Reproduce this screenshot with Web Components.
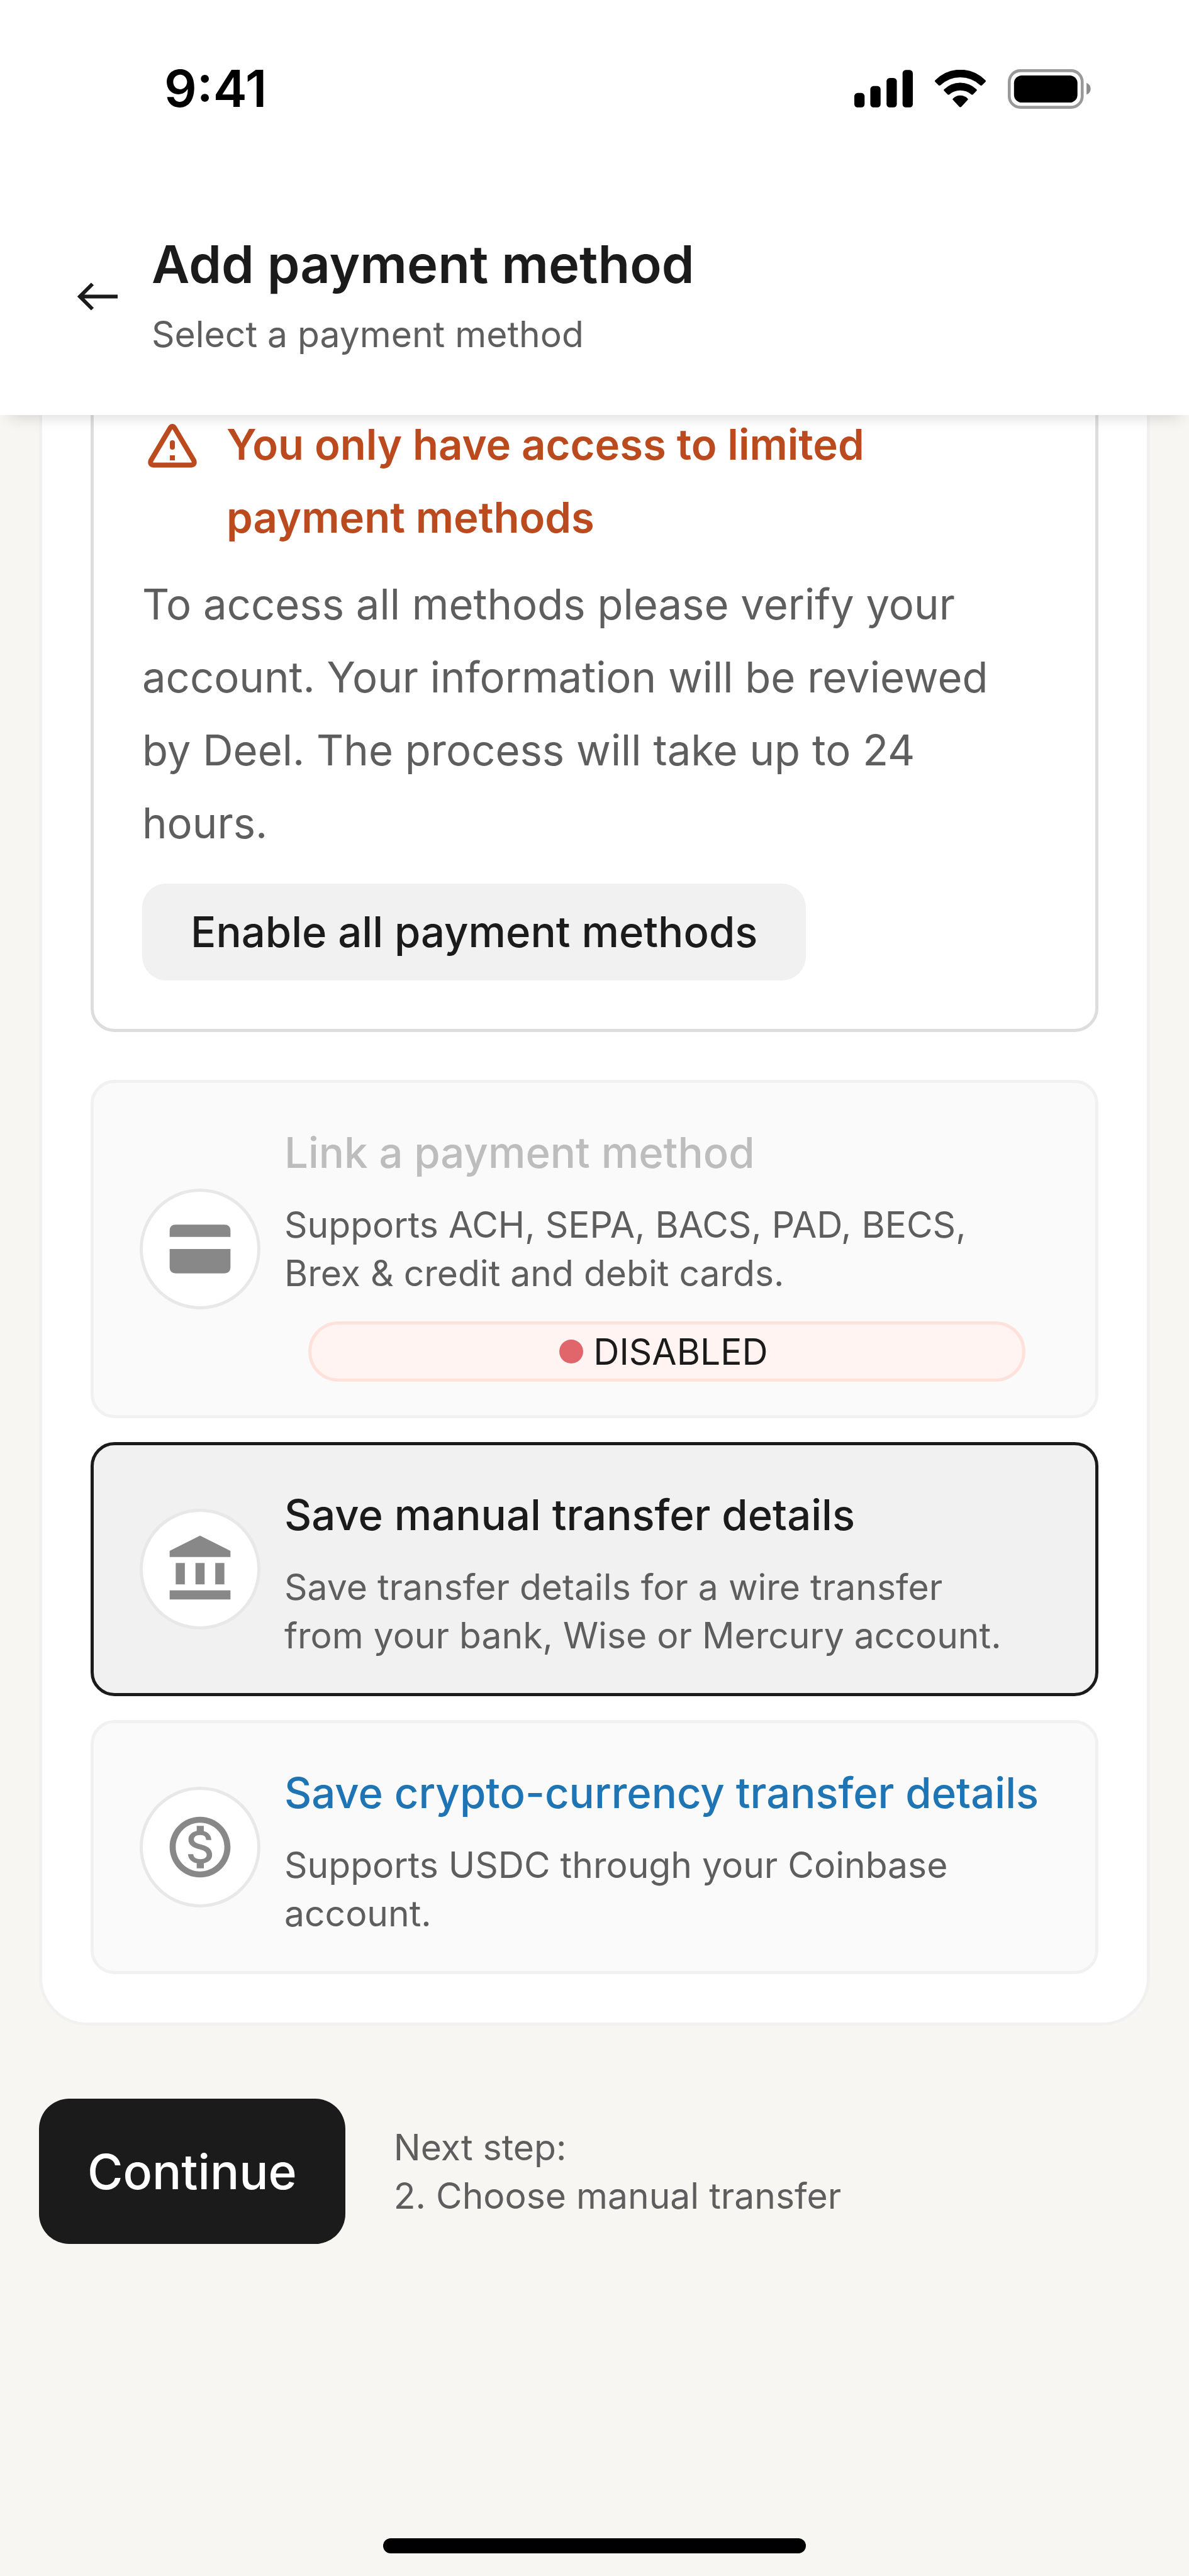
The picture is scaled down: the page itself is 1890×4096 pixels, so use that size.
<!DOCTYPE html>
<html lang="en">
<head>
<meta charset="utf-8">
<meta name="viewport" content="width=device-width, initial-scale=1">
<title>Add payment method</title>
<style>
  :root {
    --ink: #1b1b1b;
    --muted: #5e5e5e;
    --line: #f1f1f1;
    --text-sm: 57px;
    --text-md: 67px;
    --text-lg: 77px;
    --text-xl: 83px;
    --row-sm: 77px;
    --row-md: 116px;
    --space: 77px;
    --half: 38px;
  }
  body {
    margin: 0;
    background: #f7f6f2;
    color: var(--ink);
    font-family: Inter, "Liberation Sans", sans-serif;
  }
</style>
</head>
<body>
<app-screen>
  <status-bar slot="top">9:41</status-bar>
  <page-header slot="top">
    Add payment method
    <span slot="subtitle">Select a payment method</span>
  </page-header>

  <content-panel>
    <alert-box>
      <span slot="title">You only have access to limited payment methods</span>
      To access all methods please verify your account. Your information will be reviewed by Deel. The process will take up to 24 hours.
      <span slot="action">Enable all payment methods</span>
    </alert-box>
    <method-option icon="card" disabled>
      <span slot="title">Link a payment method</span>
      Supports ACH, SEPA, BACS, PAD, BECS, Brex &amp; credit and debit cards.
      <status-badge slot="badge">DISABLED</status-badge>
    </method-option>
    <method-option icon="bank" selected>
      <span slot="title">Save manual transfer details</span>
      Save transfer details for a wire transfer from your bank, Wise or Mercury account.
    </method-option>
    <method-option icon="coin" link>
      <span slot="title">Save crypto-currency transfer details</span>
      Supports USDC through your Coinbase account.
    </method-option>
  </content-panel>

  <step-footer>
    Continue
    <span slot="label">Next step:</span>
    <span slot="step">2. Choose manual transfer</span>
  </step-footer>
</app-screen>

<script>
  const define = (name, html, setup) => {
    const template = document.createElement('template');
    template.innerHTML = html;
    customElements.define(name, class extends HTMLElement {
      constructor() {
        super();
        this.attachShadow({ mode: 'open' }).append(template.content.cloneNode(true));
      }
      connectedCallback() {
        if (setup) setup(this, this.shadowRoot);
      }
    });
  };

  define('app-screen', `
    <style>
      :host { display: flex; flex-direction: column; min-height: 100vh; }
      .top { position: relative; z-index: 1; background: #fff; box-shadow: 0 16px 24px -14px rgba(0, 0, 0, .16); }
      /* the list is scrolled, so its first rows run beneath the header */
      main { margin: -175px 62px 0; }
      .home { width: 672px; max-width: 60%; height: 24px; margin: auto auto 36px; border-radius: 12px; background: #000; }
    </style>
    <div class="top"><slot name="top"></slot></div>
    <main><slot></slot></main>
    <div class="home"></div>
  `);

  define('status-bar', `
    <style>
      :host { display: flex; align-items: center; justify-content: space-between; box-sizing: border-box;
        height: 282px; padding: 0 156px 0 261px; color: #000; font-size: 81px; font-weight: 600; }
      .icons { display: flex; align-items: center; gap: 35px; }
      svg { display: block; }
    </style>
    <slot></slot>
    <div class="icons">
      <svg width="93" height="60" viewBox="114 98 285 182">
        <rect x="114" y="210" width="50" height="70" rx="16"/>
        <rect x="192" y="176" width="50" height="104" rx="16"/>
        <rect x="271" y="137" width="50" height="143" rx="16"/>
        <rect x="349" y="98" width="50" height="182" rx="16"/>
      </svg>
      <svg width="81" height="60" viewBox="507 98 246 182">
        <path d="M509 148Q560 97 630 97T751 148Q755 152 751 156L735 172Q731 176 726 172Q685 134 630 134T534 172Q529 176 525 172L509 156Q505 152 509 148Z"/>
        <path d="M552 192Q585 160 630 160T708 192Q712 196 708 200L692 216Q687 221 682 216Q660 197 630 197T578 216Q573 221 568 216L552 200Q548 196 552 192Z"/>
        <path d="M595 236Q610 222 630 222T665 236Q669 240 665 244L635 276Q630 281 625 276L595 244Q591 240 595 236Z"/>
      </svg>
      <svg width="132" height="63" viewBox="861 93 403 192">
        <rect x="868" y="100" width="354" height="178" rx="54" fill="none" stroke="#999" stroke-width="14"/>
        <rect x="891" y="123" width="308" height="132" rx="38"/>
        <path d="M1243 159Q1263 168 1263 188T1243 216Z" fill="#8c8c8c"/>
      </svg>
    </div>
  `);

  define('page-header', `
    <style>
      :host { display: flex; align-items: center; gap: 29px; padding: 80px 97px 80px; }
      button { flex: none; width: 115px; height: 115px; padding: 0; border: 0; background: none; color: var(--ink); cursor: pointer; }
      svg { display: block; }
      h1 { margin: 0 0 6px; font-size: var(--text-xl); line-height: var(--row-md); font-weight: 600; }
      p { margin: 0; font-size: var(--text-sm); line-height: 96px; color: var(--muted); }
    </style>
    <button type="button" aria-label="Back">
      <svg width="115" height="115" viewBox="0 0 115 115" fill="none" stroke="currentColor" stroke-width="6">
        <path d="M90 57.500H30M50 37.500L30 57.500L50 77.500"/>
      </svg>
    </button>
    <div>
      <h1><slot></slot></h1>
      <p><slot name="subtitle"></slot></p>
    </div>
  `);

  define('content-panel', `
    <style>
      :host { display: flex; flex-direction: column; gap: var(--half); padding: var(--space);
        border: 5px solid var(--line); border-radius: 77px; background: #fff; }
    </style>
    <slot></slot>
  `);

  define('alert-box', `
    <style>
      :host { display: block; margin-bottom: var(--half); padding: var(--space); border: 5px solid #ddd;
        border-radius: 38px; font-size: var(--text-md); line-height: var(--row-md); }
      .head { display: flex; gap: var(--half); color: #bb4a1e; }
      svg { flex: none; display: block; margin-top: 10px; }
      h2 { margin: 0; font-size: inherit; font-weight: 600; }
      p { margin: 22px 0 var(--half); color: var(--muted); }
      button { height: 154px; padding: 0 var(--space); border: 0; border-radius: 38px; background: #f1f1f1;
        color: var(--ink); font: inherit; font-weight: 500; cursor: pointer; }
    </style>
    <div class="head">
      <svg width="96" height="96" viewBox="0 0 96 96" fill="none" stroke="currentColor">
        <path d="M44.500 21.500Q48 16.500 51.500 21.500L82 73Q84.500 79.500 78 80.500H18Q11.500 79.500 14 73Z" stroke-width="8" stroke-linejoin="round"/>
        <path d="M48 45V52" stroke-width="8" stroke-linecap="round"/>
        <path d="M48 65V73" stroke-width="8"/>
      </svg>
      <h2><slot name="title"></slot></h2>
    </div>
    <p><slot></slot></p>
    <button type="button"><slot name="action"></slot></button>
  `);

  const icons = {
    card: '<path d="M2 6Q2 4 4 4H20Q22 4 22 6V8H2ZM2 12H22V18Q22 20 20 20H4Q2 20 2 18Z"/>',
    bank: '<path d="M12 1L22 6V8H2V6ZM4 10H7V17H4ZM10.500 10H13.500V17H10.500ZM17 10H20V17H17ZM2 19H22V22H2Z"/>',
    coin: '<path d="M12 2C6.480 2 2 6.480 2 12s4.480 10 10 10 10-4.480 10-10S17.520 2 12 2zm0 18c-4.410 0-8-3.590-8-8s3.590-8 8-8 8 3.590 8 8-3.590 8-8 8zm.31-8.860c-1.770-.45-2.340-.94-2.340-1.670 0-.84.790-1.430 2.100-1.430 1.380 0 1.900.66 1.940 1.640h1.710c-.05-1.340-.87-2.570-2.490-2.970V5H10.900v1.690c-1.510.32-2.720 1.300-2.720 2.810 0 1.790 1.490 2.690 3.660 3.210 1.950.46 2.340 1.150 2.340 1.870 0 .53-.39 1.390-2.100 1.390-1.600 0-2.230-.72-2.320-1.640H8.040c.1 1.700 1.360 2.660 2.860 2.970V19h2.340v-1.670c1.520-.29 2.720-1.160 2.730-2.770-.01-2.200-1.900-2.960-3.660-3.420z"/>'
  };

  define('method-option', `
    <style>
      :host { display: block; }
      button { display: flex; align-items: center; gap: var(--half); width: 100%; margin: 0; padding: 53px 73px;
        border: 5px solid var(--line); border-radius: 38px; background: #fafafa; color: var(--muted);
        font: inherit; font-size: var(--text-sm); line-height: var(--row-sm); text-align: left; cursor: pointer; }
      button:disabled { cursor: default; }
      .icon { flex: none; display: grid; place-items: center; box-sizing: border-box; width: 192px; height: 192px;
        border: 5px solid #e8e8e8; border-radius: 50%; background: #fff; }
      svg { display: block; width: 116px; height: 116px; fill: #888; }
      .text { flex: 1; min-width: 0; display: flex; flex-direction: column; }
      .title { margin-bottom: 19px; font-size: var(--text-md); line-height: 115px; font-weight: 500; color: var(--ink); }
      .detail { padding-right: var(--half); }
      :host([disabled]) .title { color: #bdbdbd; }
      :host([link]) .title { color: #1f74b4; }
      :host([selected]) button { border-color: var(--ink); background: #f1f1f1; }
    </style>
    <button type="button">
      <span class="icon"><svg viewBox="0 0 24 24" aria-hidden="true"></svg></span>
      <span class="text">
        <span class="title"><slot name="title"></slot></span>
        <span class="detail"><slot></slot></span>
        <slot name="badge"></slot>
      </span>
    </button>
  `, (host, root) => {
    root.querySelector('svg').innerHTML = icons[host.getAttribute('icon')];
    const button = root.querySelector('button');
    button.disabled = host.hasAttribute('disabled');
    button.setAttribute('aria-pressed', host.hasAttribute('selected'));
  });

  define('status-badge', `
    <style>
      :host { display: flex; align-items: center; justify-content: center; gap: 16px; box-sizing: border-box;
        height: 96px; margin: var(--half) var(--half) 0; padding-right: 10px; border: 5px solid #ffe1dc;
        border-radius: 48px; background: #fff4f2; color: var(--ink); }
      i { width: 38px; height: 38px; border-radius: 50%; background: #e0666c; }
    </style>
    <i></i><span><slot></slot></span>
  `);

  define('step-footer', `
    <style>
      :host { display: flex; align-items: center; gap: var(--space); margin-top: var(--row-md); }
      button { flex: none; height: 231px; padding: 0 var(--space); border: 0; border-radius: 48px; background: var(--ink);
        color: #fff; font: inherit; font-size: var(--text-lg); font-weight: 500; cursor: pointer; }
      div { display: flex; flex-direction: column; font-size: var(--text-sm); line-height: var(--row-sm); color: var(--muted); }
    </style>
    <button type="button"><slot></slot></button>
    <div><slot name="label"></slot><slot name="step"></slot></div>
  `);
</script>
</body>
</html>
